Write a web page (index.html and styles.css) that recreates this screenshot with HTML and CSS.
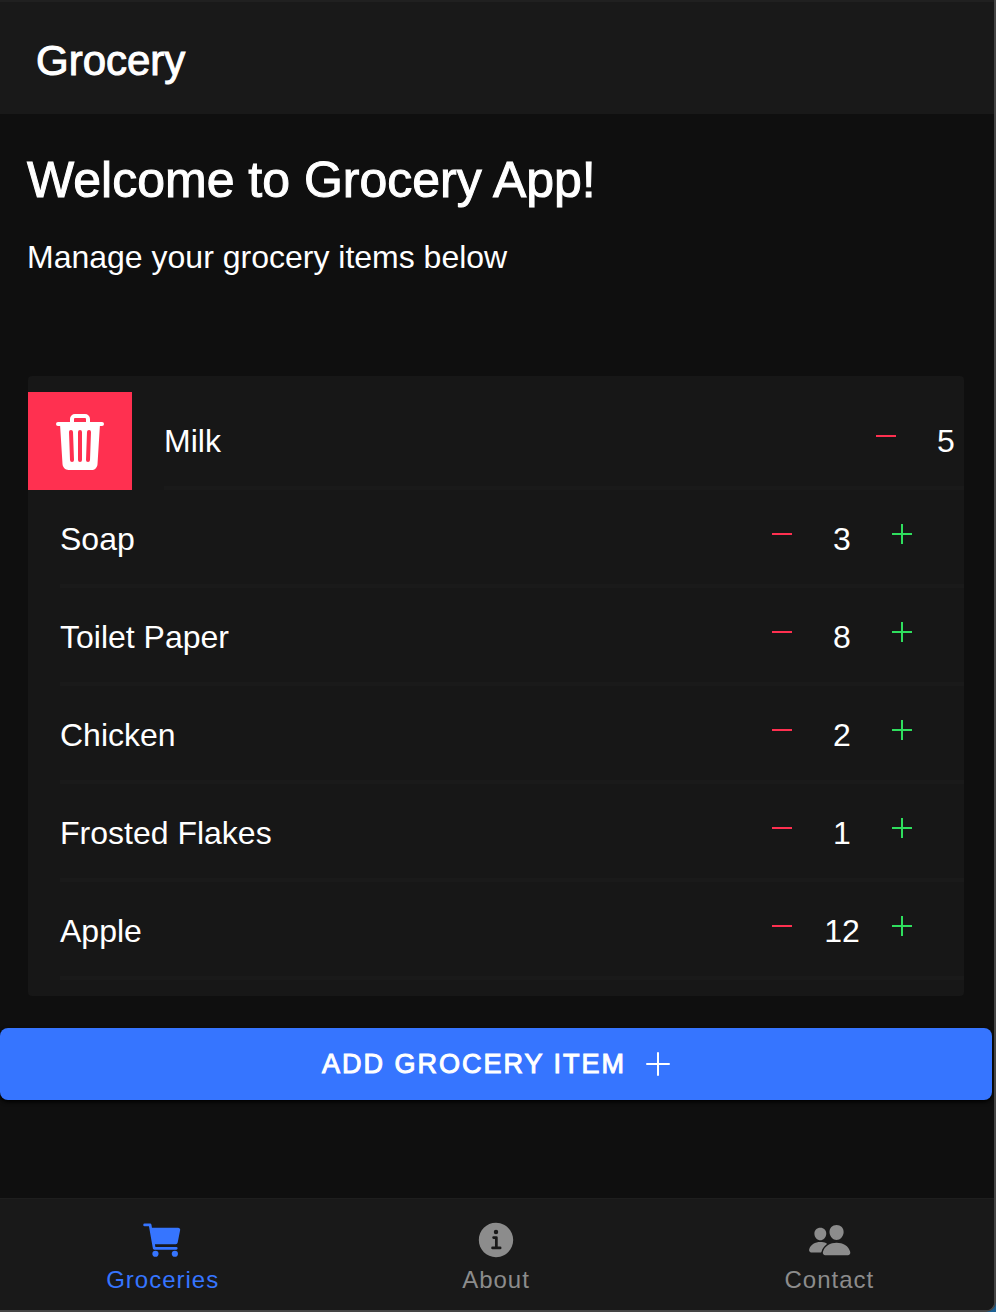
FILE: index.html
```html
<!DOCTYPE html>
<html lang="en">
<head>
<meta charset="utf-8">
<meta name="viewport" content="width=device-width, initial-scale=1">
<title>Grocery</title>
<link rel="stylesheet" href="styles.css">
</head>
<body>
<svg class="sprite" aria-hidden="true">
  <symbol id="minus" viewBox="0 0 20 20"><path d="M0 10h20" stroke="currentColor" stroke-width="2"/></symbol>
  <symbol id="plus" viewBox="0 0 20 20"><path d="M0 10h20M10 0v20" stroke="currentColor" stroke-width="2"/></symbol>
</svg>
<div class="app">
  <header class="toolbar"><span class="toolbar-title">Grocery</span></header>
  <main class="content">
    <div class="intro">
      <h1 class="welcome">Welcome to Grocery App!</h1>
      <p class="lead">Manage your grocery items below</p>
    </div>
    <ul class="list">
      <li class="row">
        <button class="delete" type="button" aria-label="Delete Milk">
          <svg class="trash" viewBox="0 0 512 512" fill="currentColor"><path d="M432 96h-96V72a40 40 0 00-40-40h-80a40 40 0 00-40 40v24H80a16 16 0 000 32h17l19 304.92c1.42 26.85 22 47.08 48 47.08h184c26.13 0 46.3-19.78 48-47l19-305h17a16 16 0 000-32zM192.57 416H192a16 16 0 01-16-15.43l-8-224a16 16 0 1132-1.14l8 224A16 16 0 01192.57 416zM272 400a16 16 0 01-32 0V176a16 16 0 0132 0zm32-304h-96V72a7.91 7.91 0 018-8h80a7.91 7.91 0 018 8zm32 304.57A16 16 0 01320 416h-.58A16 16 0 01304 399.43l8-224a16 16 0 1132 1.14z"/></svg>
        </button>
        <div class="item"><span class="name">Milk</span><button class="step less" type="button" aria-label="Remove one Milk"><svg class="sign"><use href="#minus"/></svg></button><span class="count">5</span><button class="step more" type="button" aria-label="Add one Milk"><svg class="sign"><use href="#plus"/></svg></button></div>
      </li>
      <li class="row"><div class="item"><span class="name">Soap</span><button class="step less" type="button" aria-label="Remove one Soap"><svg class="sign"><use href="#minus"/></svg></button><span class="count">3</span><button class="step more" type="button" aria-label="Add one Soap"><svg class="sign"><use href="#plus"/></svg></button></div></li>
      <li class="row"><div class="item"><span class="name">Toilet Paper</span><button class="step less" type="button" aria-label="Remove one Toilet Paper"><svg class="sign"><use href="#minus"/></svg></button><span class="count">8</span><button class="step more" type="button" aria-label="Add one Toilet Paper"><svg class="sign"><use href="#plus"/></svg></button></div></li>
      <li class="row"><div class="item"><span class="name">Chicken</span><button class="step less" type="button" aria-label="Remove one Chicken"><svg class="sign"><use href="#minus"/></svg></button><span class="count">2</span><button class="step more" type="button" aria-label="Add one Chicken"><svg class="sign"><use href="#plus"/></svg></button></div></li>
      <li class="row"><div class="item"><span class="name">Frosted Flakes</span><button class="step less" type="button" aria-label="Remove one Frosted Flakes"><svg class="sign"><use href="#minus"/></svg></button><span class="count">1</span><button class="step more" type="button" aria-label="Add one Frosted Flakes"><svg class="sign"><use href="#plus"/></svg></button></div></li>
      <li class="row"><div class="item"><span class="name">Apple</span><button class="step less" type="button" aria-label="Remove one Apple"><svg class="sign"><use href="#minus"/></svg></button><span class="count">12</span><button class="step more" type="button" aria-label="Add one Apple"><svg class="sign"><use href="#plus"/></svg></button></div></li>
    </ul>
    <button class="add" type="button">Add Grocery Item<svg class="add-icon" viewBox="0 0 24 24" fill="none" stroke="currentColor" stroke-width="2" stroke-linecap="round"><path d="M1 12h22M12 1v22"/></svg></button>
  </main>
  <nav class="tabs">
    <a class="tab active" href="#groceries" aria-current="page">
      <svg class="tab-icon" viewBox="0 0 512 512" fill="currentColor"><circle cx="168" cy="416" r="36"/><circle cx="394" cy="416" r="36"/><path d="M450 120.78a23.92 23.92 0 00-18.56-8.78H127.89l-6.13-34.78A16 16 0 00106 64H42a16 16 0 000 32h50.58l45.66 258.78A16 16 0 00154 368h256a16 16 0 000-32H167.42l-5.64-32h241.66A24.07 24.07 0 00427 284.71l28.8-144a24 24 0 00-5-19.93z"/></svg>
      <span>Groceries</span>
    </a>
    <a class="tab" href="#about">
      <svg class="tab-icon" viewBox="0 0 512 512" fill="currentColor"><path d="M256 56C145.72 56 56 145.72 56 256s89.72 200 200 200 200-89.72 200-200S366.28 56 256 56zm0 82a26 26 0 11-26 26 26 26 0 0126-26zm48 226h-88a16 16 0 010-32h28v-88h-16a16 16 0 010-32h32a16 16 0 0116 16v104h28a16 16 0 010 32z"/></svg>
      <span>About</span>
    </a>
    <a class="tab" href="#contact">
      <svg class="tab-icon" viewBox="-8 0 512 512" fill="currentColor"><path d="M336 256c-20.56 0-40.44-9.18-56-25.84-15.13-16.25-24.37-37.92-26-61-1.74-24.62 5.77-47.26 21.14-63.76S312 80 336 80c23.83 0 45.38 9.06 60.7 25.52 15.47 16.62 23 39.22 21.26 63.63-1.67 23.11-10.9 44.77-26 61C376.44 246.82 356.57 256 336 256zM467.83 432H204.18a27.71 27.71 0 01-22-10.67 30.22 30.22 0 01-5.26-25.79c8.42-33.81 29.28-61.85 60.32-81.08C264.79 297.4 299.86 288 336 288c36.85 0 71 9 98.71 26.05 31.11 19.13 52 47.33 60.38 81.55a30.27 30.27 0 01-5.32 25.78A27.68 27.68 0 01467.83 432zM147 260c-35.19 0-66.13-32.72-69-72.93-1.42-20.6 5-39.65 18-53.62 12.86-13.83 31-21.45 51-21.45s38 7.66 50.93 21.57c13.1 14.08 19.5 33.09 18 53.52-2.87 40.2-33.8 72.91-68.93 72.91zM212.66 291.45c-17.59-8.6-40.42-12.9-65.65-12.9-29.46 0-58.07 7.68-80.57 21.62-25.51 15.83-42.67 38.88-49.6 66.71a27.39 27.39 0 004.79 23.36A25.32 25.32 0 0041.72 400h111a8 8 0 007.87-6.57c.11-.63.25-1.26.41-1.88 8.48-34.06 28.35-62.84 57.71-83.82a8 8 0 00-.63-13.39c-1.57-.92-3.37-1.89-5.42-2.89z"/></svg>
      <span>Contact</span>
    </a>
  </nav>
</div>
</body>
</html>
```

FILE: styles.css
```css
*, *::before, *::after { box-sizing: border-box; }

body {
  margin: 0;
  background: #1b5f91;
  color: #fff;
  font-family: "Liberation Sans", Arial, sans-serif;
  font-size: 32px;
  line-height: 40px;
}

button {
  border: 0;
  padding: 0;
  background: none;
  color: inherit;
  font: inherit;
  cursor: pointer;
}

svg { display: block; }

.sprite { display: none; }

.app {
  display: flex;
  flex-direction: column;
  min-height: 100vh;
  overflow: hidden;
  background: #0f0f0f;
  border: solid #454545;
  border-width: 0 2px 2px 0;
  border-bottom-right-radius: 10px;
}

.toolbar {
  display: flex;
  align-items: center;
  height: 114px;
  padding: 6px 36px 0;
  background: #191919;
  border-top: 2px solid #202020;
}

.toolbar-title {
  font-size: 42px;
  line-height: 48px;
  -webkit-text-stroke: 1px currentColor;
}

.content {
  display: flex;
  flex-direction: column;
  flex: 1;
}

.intro { padding: 36px 27px 0; }

.welcome {
  margin: 0 0 27px;
  font-size: 50px;
  font-weight: 400;
  line-height: 60px;
  -webkit-text-stroke: 1px currentColor;
}

.lead { margin: 0; }

.list {
  margin: 99px 30px 32px 28px;
  padding: 16px 0;
  border-radius: 4px;
  background: #171717;
  list-style: none;
}

.row {
  display: flex;
  height: 98px;
  overflow: hidden;
}

.delete {
  display: flex;
  flex: none;
  align-items: center;
  justify-content: center;
  width: 104px;
  padding-top: 2px;
  background: #ff3050;
}

.trash { width: 64px; height: 64px; }

.item {
  display: flex;
  flex: none;
  align-items: stretch;
  width: 100%;
  padding: 0 32px;
  background: linear-gradient(#1a1a1a, #1a1a1a) 32px 100% / 100% 4px no-repeat;
  line-height: 98px;
}

.name { flex: 1; }

.step {
  display: flex;
  align-items: center;
  justify-content: center;
  width: 60px;
  padding-bottom: 10px;
}

.sign { width: 20px; height: 20px; }

.less { color: #ff3050; }

.more { color: #2fdf5e; }

.count {
  width: 60px;
  text-align: center;
}

.add {
  display: flex;
  align-items: center;
  justify-content: center;
  gap: 20px;
  height: 72px;
  margin: 0 2px 0 0;
  border-radius: 8px;
  background: #3675ff;
  box-shadow: 0 2px 4px #000;
  font-size: 27px;
  letter-spacing: 2px;
  text-transform: uppercase;
  -webkit-text-stroke: 1px currentColor;
}

.add-icon { width: 24px; height: 24px; }

.tabs {
  display: grid;
  grid-template-columns: repeat(3, 1fr);
  height: 112px;
  margin: 0 -2px 0 -4px;
  background: #191919;
  border-top: 1px solid #1e1e1e;
}

.tab {
  display: flex;
  flex-direction: column;
  align-items: center;
  gap: 2px;
  padding-top: 19px;
  color: #8c8c8c;
  font-size: 24px;
  line-height: 32px;
  letter-spacing: 1px;
  text-decoration: none;
}

.tab.active { color: #3675ff; }

.tab-icon { width: 44px; height: 44px; }
```
